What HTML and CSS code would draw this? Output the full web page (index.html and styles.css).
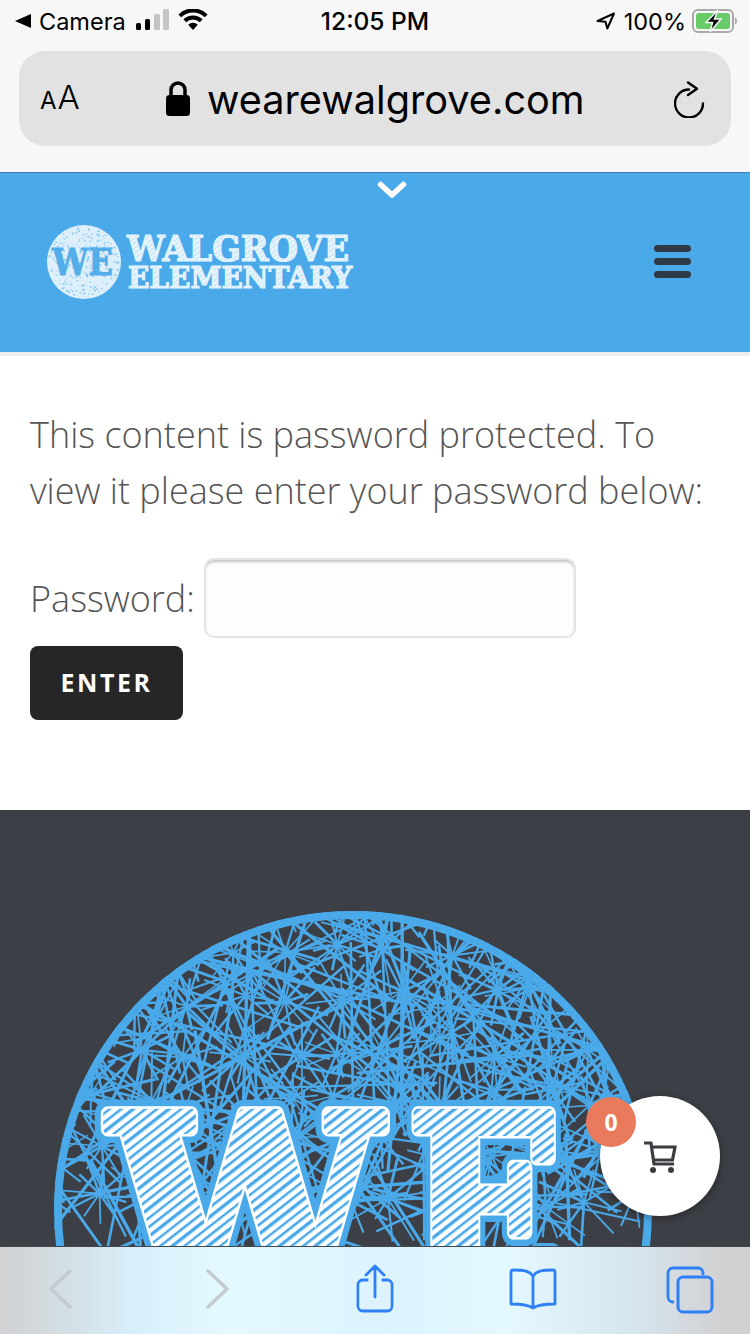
FILE: index.html
```html
<!DOCTYPE html>
<html lang="en">
<head>
  <meta charset="UTF-8">
  <meta name="viewport" content="width=device-width, initial-scale=1.0">
  <title>Walgrove Elementary</title>
  <link rel="stylesheet" href="styles.css">
</head>
<body>
  <div class="browser-top">
    <div class="status-bar">
      <div class="status-left">
        <svg class="back-arrow" width="16" height="14" viewBox="0 0 16 14"><path d="M16 0v14L0 7z" fill="#000"/></svg>
        <span class="carrier">Camera</span>
        <svg class="signal" width="33" height="21" viewBox="0 0 33 21">
          <rect x="0" y="14" width="5" height="7" rx="1.500" fill="#000"/>
          <rect x="9" y="10" width="5" height="11" rx="1.500" fill="#000"/>
          <rect x="18" y="5" width="6" height="16" rx="1.500" fill="#c4c4c4"/>
          <rect x="27" y="0" width="6" height="21" rx="1.500" fill="#c4c4c4"/>
        </svg>
        <svg class="wifi" width="30" height="21" viewBox="0 0 30 21">
          <path d="M15 21l-4.800-5.200a6.800 6.800 0 0 1 9.600 0z" fill="#000"/>
          <path d="M6.800 11.800a11.800 11.800 0 0 1 16.400 0M1.800 6.800a18.800 18.800 0 0 1 26.400 0" fill="none" stroke="#000" stroke-width="4"/>
        </svg>
      </div>
      <div class="status-time">12:05 PM</div>
      <div class="status-right">
        <svg width="20" height="18" viewBox="0 0 20 18"><path d="M18 1.500L1.500 9l8 .8 1.800 6.700z" fill="none" stroke="#000" stroke-width="2" stroke-linejoin="round"/></svg>
        <span>100%</span>
        <svg width="46" height="24" viewBox="0 0 46 24">
          <rect x="1" y="1" width="40" height="22" rx="5" fill="none" stroke="#a9a9a9" stroke-width="2"/>
          <rect x="4" y="4" width="34" height="16" rx="2.500" fill="#69cb68"/>
          <path d="M43 8.500c1.500.5 2 2 2 3.500s-.5 3-2 3.500z" fill="#a9a9a9"/>
          <path d="M26 1L14 13.500h6.500L18 23l11-13h-6.500z" fill="#000" stroke="#f7f7f7" stroke-width="1.500"/>
        </svg>
      </div>
    </div>
    <div class="address-bar">
      <div class="text-size"><span class="small-a">A</span>A</div>
      <div class="address">
        <svg width="26" height="36" viewBox="0 0 26 36">
          <rect x="1" y="14" width="24" height="21" rx="3.500" fill="#000"/>
          <path d="M6 15V9a7 7 0 0 1 14 0v6" fill="none" stroke="#000" stroke-width="3.500"/>
        </svg>
        <span class="domain">wearewalgrove.com</span>
      </div>
      <svg width="32" height="38" viewBox="0 0 32 38">
        <path d="M15 9.500A14 14 0 1 0 29 23.500" fill="none" stroke="#000" stroke-width="2.400" stroke-linecap="round"/>
        <path d="M14 2.500l9 6.300-9 6.200" fill="none" stroke="#000" stroke-width="2.400" stroke-linecap="round" stroke-linejoin="round"/>
      </svg>
    </div>
  </div>

  <div class="site-header">
    <svg class="chevron" width="30" height="18" viewBox="0 0 30 18"><path d="M3.500 3.500L15 14 26.500 3.500" fill="none" stroke="#fff" stroke-width="5.500" stroke-linecap="round" stroke-linejoin="round"/></svg>
    <svg class="logo" width="310" height="80" viewBox="0 0 310 80" id="siteLogo">
      <defs>
        <pattern id="logoHatch" width="4" height="4" patternUnits="userSpaceOnUse" patternTransform="rotate(-40)">
          <rect width="4" height="4" fill="#e6f4fc"/>
          <rect width="4" height="1" fill="#c0e1f7"/>
        </pattern>
      </defs>
      <circle cx="37" cy="40" r="37" fill="#dceffb"/>
      <g id="logoDots"></g>
      <text class="logo-we" x="5" y="53" textLength="61" lengthAdjust="spacingAndGlyphs">WE</text>
      <text class="logo-line1" x="80" y="39" textLength="222" lengthAdjust="spacingAndGlyphs">WALGROVE</text>
      <text class="logo-line2" x="81" y="66" textLength="224" lengthAdjust="spacingAndGlyphs">ELEMENTARY</text>
    </svg>
    <div class="hamburger"><span></span><span></span><span></span></div>
  </div>

  <div class="content">
    <p class="notice">This content is password protected. To view it please enter your password below:</p>
    <form class="password-form">
      <div class="password-row">
        <label for="pwd">Password:</label>
        <input type="password" id="pwd" class="password-input">
      </div>
      <button type="button" class="enter-btn">ENTER</button>
    </form>
  </div>

  <div class="hero">
    <svg class="hero-art" width="750" height="436" viewBox="0 0 750 436">
      <defs>
        <clipPath id="discClip"><circle cx="353" cy="400" r="299"/></clipPath>
        <pattern id="hatch" width="22" height="22" patternUnits="userSpaceOnUse" patternTransform="rotate(-38)">
          <rect width="22" height="22" fill="#fff"/>
          <rect y="1" width="22" height="2.600" fill="#4aa9e9"/>
          <rect y="8" width="22" height="3.400" fill="#4aa9e9"/>
          <rect y="16" width="22" height="2.400" fill="#4aa9e9"/>
        </pattern>
      </defs>
      <g clip-path="url(#discClip)">
        <circle cx="353" cy="400" r="299" fill="#3c3f45"/>
        <g id="mesh"></g>
      </g>
      <circle cx="353" cy="400" r="295" fill="none" stroke="#4aa9e9" stroke-width="8"/>
      <text class="hero-we halo" x="110" y="491" textLength="270" lengthAdjust="spacingAndGlyphs">W</text>
      <text class="hero-we halo" x="408" y="491" textLength="154" lengthAdjust="spacingAndGlyphs">E</text>
      <text class="hero-we outline" x="110" y="491" textLength="270" lengthAdjust="spacingAndGlyphs">W</text>
      <text class="hero-we outline" x="408" y="491" textLength="154" lengthAdjust="spacingAndGlyphs">E</text>
      <text class="hero-we letters" x="110" y="491" textLength="270" lengthAdjust="spacingAndGlyphs">W</text>
      <text class="hero-we letters" x="408" y="491" textLength="154" lengthAdjust="spacingAndGlyphs">E</text>
    </svg>
    <div class="cart-button">
      <span class="cart-count">0</span>
      <svg width="34" height="36" viewBox="0 0 34 36">
        <path d="M1 5h7l3 21h20" fill="none" stroke="#3b3d42" stroke-width="3.200"/>
        <path d="M9.500 9H32l-2.500 13H11" fill="none" stroke="#3b3d42" stroke-width="3.200"/>
        <circle cx="10" cy="32" r="3" fill="#3b3d42"/>
        <circle cx="28" cy="32" r="3" fill="#3b3d42"/>
      </svg>
    </div>
  </div>

  <div class="toolbar">
    <svg width="60" height="50" viewBox="0 0 60 50"><path d="M40 7L21 25l19 18" fill="none" stroke="#c4cbd0" stroke-width="3.500" stroke-linecap="round" stroke-linejoin="round"/></svg>
    <svg width="60" height="50" viewBox="0 0 60 50"><path d="M20 7l19 18-19 18" fill="none" stroke="#c4cbd0" stroke-width="3.500" stroke-linecap="round" stroke-linejoin="round"/></svg>
    <svg width="60" height="50" viewBox="0 0 60 50">
      <path d="M23 16h-6a5 5 0 0 0-5 5v21a5 5 0 0 0 5 5h26a5 5 0 0 0 5-5V21a5 5 0 0 0-5-5h-6" fill="none" stroke="#2f7ff5" stroke-width="2.800" transform="translate(1.500 0) scale(.95 1)"/>
      <path d="M30 33V3M21 11l9-9 9 9" fill="none" stroke="#2f7ff5" stroke-width="2.800" stroke-linecap="round" stroke-linejoin="round"/>
    </svg>
    <svg width="60" height="50" viewBox="0 0 60 50">
      <path d="M30 12c-3-5-9-6-20-6-1.500 0-2 1-2 2v32c6 0 16 0 22 4 6-4 16-4 22-4V8c0-1-.5-2-2-2-11 0-17 1-20 6zM30 12v32" fill="none" stroke="#2f7ff5" stroke-width="2.800" stroke-linejoin="round"/>
    </svg>
    <svg width="60" height="50" viewBox="0 0 60 50">
      <path d="M14 38h-1a5 5 0 0 1-5-5V9a5 5 0 0 1 5-5h25a5 5 0 0 1 5 5v2" fill="none" stroke="#2f7ff5" stroke-width="2.800"/>
      <rect x="18" y="13" width="34" height="35" rx="5" fill="none" stroke="#2f7ff5" stroke-width="3"/>
    </svg>
  </div>

  <script src="mesh.js"></script>
</body>
</html>
```

FILE: styles.css
```css
* {
  margin: 0;
  padding: 0;
  box-sizing: border-box;
}

body {
  width: 750px;
  height: 1334px;
  overflow: hidden;
  display: flex;
  flex-direction: column;
  background: #fff;
  font-family: 'Open Sans', Arial, sans-serif;
}

.browser-top {
  height: 172px;
  background: #f7f7f7;
  padding: 0 19px;
  font-family: Inter, Arial, sans-serif;
  color: #000;
}

.status-bar {
  height: 51px;
  padding-bottom: 9px;
  display: grid;
  grid-template-columns: 1fr auto 1fr;
  align-items: center;
  font-size: 23.500px;
}

.status-left {
  display: flex;
  align-items: center;
  margin-left: -4px;
}

.carrier {
  margin: 0 10px 0 8px;
}

.signal,
.wifi {
  margin-top: -3px;
}

.wifi {
  margin-left: 9px;
}

.status-time {
  font-size: 24.500px;
  font-weight: 500;
}

.status-right {
  display: flex;
  align-items: center;
  justify-content: flex-end;
  gap: 6px;
  margin-right: -7px;
}

.status-right span {
  margin-left: 2px;
}

.address-bar {
  height: 95px;
  border-radius: 26px;
  background: #e2e2e2;
  display: flex;
  align-items: center;
  justify-content: space-between;
  padding: 0 25px 0 21px;
}

.text-size {
  font-size: 33px;
  font-weight: 300;
  line-height: 1;
  width: 125px;
  letter-spacing: -1px;
  margin-top: -3px;
}

.small-a {
  font-size: 24px;
  font-weight: 400;
  margin-right: 2px;
}

.address {
  display: flex;
  align-items: center;
  gap: 16px;
  font-size: 39.700px;
  flex: 1;
}

.domain {
  margin-top: 2px;
}

.site-header {
  position: relative;
  height: 184px;
  background: #4aa9e9;
  border-top: 1px solid #3a7fb5;
  border-bottom: 4px solid #eeeeee;
  display: flex;
  align-items: center;
  justify-content: space-between;
  padding: 0 59px 2px 47px;
}

.chevron {
  position: absolute;
  left: 377px;
  top: 8px;
}

.logo {
  overflow: visible;
}

.logo-we,
.logo-line1,
.logo-line2,
.hero-we {
  font-family: 'DejaVu Serif', 'Liberation Serif', serif;
  font-weight: bold;
}

.logo-we {
  font-size: 37px;
  fill: #52ade9;
  stroke: #52ade9;
  stroke-width: 0.800px;
}

.logo-line1 {
  font-size: 35px;
  fill: url(#logoHatch);
  stroke: #e6f4fc;
  stroke-width: 1.200px;
}

.logo-line2 {
  font-size: 29px;
  fill: url(#logoHatch);
  stroke: #e6f4fc;
  stroke-width: 1.200px;
}

.hamburger {
  display: flex;
  flex-direction: column;
  gap: 6.500px;
}

.hamburger span {
  display: block;
  width: 37px;
  height: 6.500px;
  border-radius: 4px;
  background: #2f3a46;
}

.content {
  height: 454px;
  padding: 51px 30px 0;
  background: #fff;
  color: #555;
  font-weight: 300;
}

.notice {
  font-size: 36px;
  line-height: 56px;
  margin-bottom: 39px;
}

.password-row {
  display: flex;
  align-items: center;
  gap: 9px;
  font-size: 36px;
}

.password-input {
  width: 372px;
  height: 80px;
  border: 2px solid #e4e4e4;
  border-radius: 10px;
  background: #fdfdfd;
  box-shadow: inset 0 3px 3px -1px #c4c4c4;
}

.enter-btn {
  display: block;
  width: 153px;
  height: 74px;
  margin-top: 8px;
  padding-bottom: 2px;
  border: none;
  border-radius: 8px;
  background: #262626;
  color: #fff;
  font-family: 'Open Sans', Arial, sans-serif;
  font-size: 25px;
  font-weight: 700;
  letter-spacing: 2.500px;
}

.hero {
  position: relative;
  flex: 1;
  overflow: hidden;
  background: #3c3f45;
}

.hero-art {
  display: block;
}

.hero-we {
  font-size: 256px;
  stroke-linejoin: round;
}

.hero-we.halo {
  fill: #4aa9e9;
  stroke: #4aa9e9;
  stroke-width: 28px;
}

.hero-we.outline {
  fill: #fff;
  stroke: #fff;
  stroke-width: 15px;
}

.hero-we.letters {
  fill: url(#hatch);
  stroke: url(#hatch);
  stroke-width: 10px;
}

.cart-button {
  position: absolute;
  left: 600px;
  top: 286px;
  width: 120px;
  height: 120px;
  border-radius: 50%;
  background: #fff;
  box-shadow: 0 2px 8px rgba(0,0,0,0.35);
  display: flex;
  align-items: center;
  justify-content: center;
}

.cart-count {
  position: absolute;
  left: -14px;
  top: 1px;
  width: 50px;
  height: 50px;
  border-radius: 50%;
  background: #e97a5b;
  color: #fff;
  font-size: 23px;
  font-weight: 700;
  line-height: 50px;
  text-align: center;
}

.toolbar {
  height: 88px;
  border-top: 1px solid #44474c;
  padding: 0 30px 4px;
  display: flex;
  align-items: center;
  justify-content: space-between;
  background: linear-gradient(to right, #d1d1d3 0%, #d3dfe4 9%, #d8effa 18%, #e4f8ff 30%, #dcf3fe 52%, #e4f8ff 68%, #d6e6ee 84%, #d1d1d3 96%);
}
```

FILE: mesh.js
```js
// desenha a malha do logo e as bolinhas do logo pequeno
const SVG_NS = 'http://www.w3.org/2000/svg';
let seed = 4711;

function rand() {
  seed = (seed * 16807) % 2147483647;
  return seed / 2147483647;
}

function addLine(parent, x1, y1, x2, y2, width) {
  const line = document.createElementNS(SVG_NS, 'line');
  line.setAttribute('x1', x1.toFixed(1));
  line.setAttribute('y1', y1.toFixed(1));
  line.setAttribute('x2', x2.toFixed(1));
  line.setAttribute('y2', y2.toFixed(1));
  line.setAttribute('stroke', '#4aa9e9');
  line.setAttribute('stroke-width', width.toFixed(1));
  parent.appendChild(line);
}

const mesh = document.getElementById('mesh');
const spacing = 50;

for (let gy = 90; gy < 436; gy += spacing) {
  for (let gx = 40; gx < 680; gx += spacing) {
    const hx = gx + rand() * 26 - 13;
    const hy = gy + rand() * 26 - 13;
    const spokes = 9 + Math.floor(rand() * 4);
    const start = rand() * Math.PI;
    for (let i = 0; i < spokes; i++) {
      const angle = start + (i / spokes) * Math.PI * 2 + rand() * 0.2;
      const len = 24 + rand() * 26;
      addLine(mesh, hx, hy, hx + Math.cos(angle) * len, hy + Math.sin(angle) * len, 1.5 + rand() * 1.4);
    }
  }
}

// linhas longas por cima
for (let i = 0; i < 250; i++) {
  const x = 50 + rand() * 600;
  const y = 100 + rand() * 330;
  const angle = rand() * Math.PI;
  const len = 50 + rand() * 80;
  addLine(mesh, x - Math.cos(angle) * len, y - Math.sin(angle) * len, x + Math.cos(angle) * len, y + Math.sin(angle) * len, 1.9 + rand() * 1.6);
}

const dots = document.getElementById('logoDots');
for (let i = 0; i < 260; i++) {
  const angle = rand() * Math.PI * 2;
  const r = Math.sqrt(rand()) * 35;
  const dot = document.createElementNS(SVG_NS, 'circle');
  dot.setAttribute('cx', (37 + Math.cos(angle) * r).toFixed(1));
  dot.setAttribute('cy', (40 + Math.sin(angle) * r).toFixed(1));
  dot.setAttribute('r', (0.4 + rand() * 0.6).toFixed(1));
  dot.setAttribute('fill', '#7fc3ef');
  dots.appendChild(dot);
}
```
